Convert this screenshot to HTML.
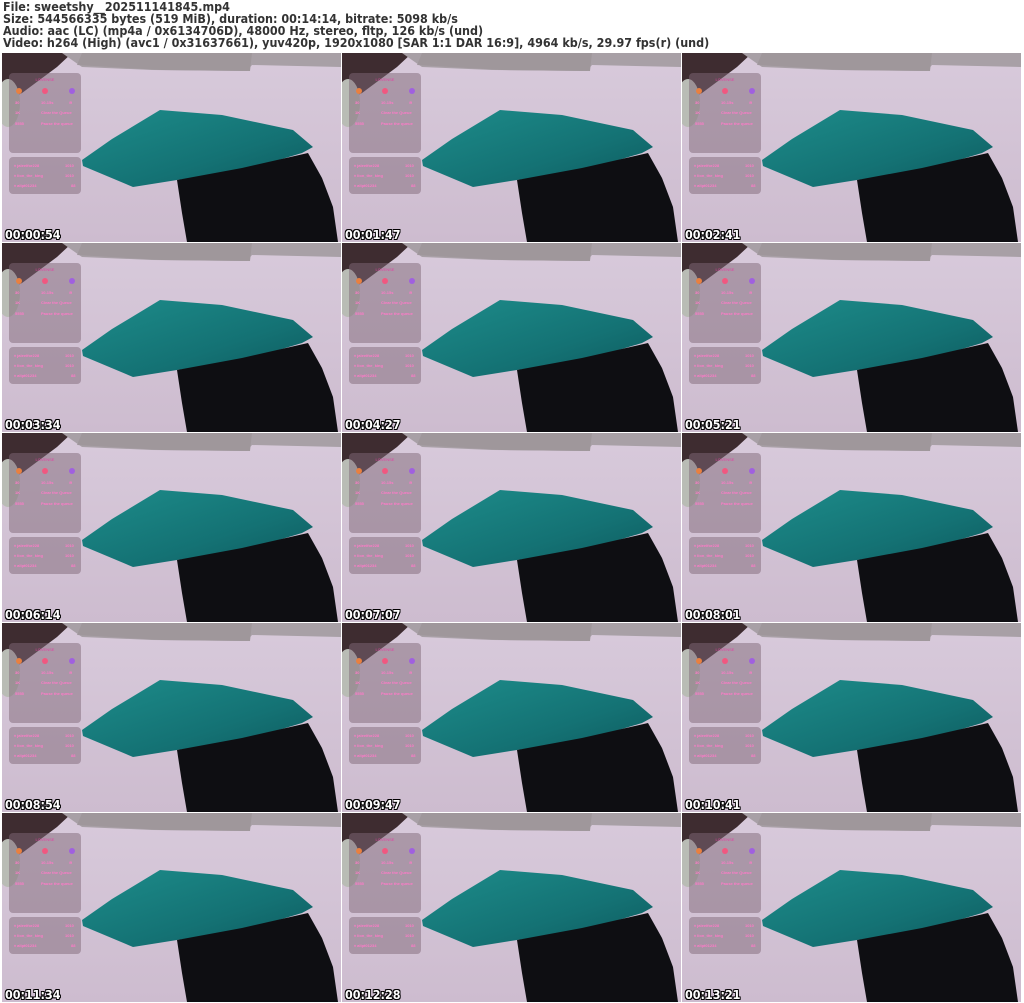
<!DOCTYPE html>
<html><head><meta charset="utf-8"><style>
html,body{margin:0;padding:0;background:#fff;width:1024px;height:1003px;overflow:hidden;position:relative}
.h{position:absolute;left:3px;top:1px;font:bold 12px/12px "DejaVu Sans",sans-serif;color:#333;white-space:pre;transform:scaleX(0.932);transform-origin:0 0}
.t{position:absolute;width:339px;height:189px;overflow:hidden;background:#d3c4d5}
.t svg{position:absolute;left:0;top:0}
.ts{position:absolute;left:3px;bottom:1px;font:bold 12px/12px "DejaVu Sans",sans-serif;color:#fff;transform:scaleX(0.93);transform-origin:0 0;text-shadow:1px 1px 0 #000,-1px -1px 0 #000,1px -1px 0 #000,-1px 1px 0 #000,0 1px 0 #000,1px 0 0 #000}
</style></head><body>
<div class="h">File: sweetshy__202511141845.mp4
Size: 544566335 bytes (519 MiB), duration: 00:14:14, bitrate: 5098 kb/s
Audio: aac (LC) (mp4a / 0x6134706D), 48000 Hz, stereo, fltp, 126 kb/s (und)
Video: h264 (High) (avc1 / 0x31637661), yuv420p, 1920x1080 [SAR 1:1 DAR 16:9], 4964 kb/s, 29.97 fps(r) (und)</div>
<svg width="0" height="0" style="position:absolute"><defs>
<linearGradient id="bed" x1="0" y1="0" x2="0" y2="1"><stop offset="0" stop-color="#d8cadb"/><stop offset="1" stop-color="#cdbccf"/></linearGradient>
<linearGradient id="pil" x1="0" y1="0" x2="1" y2="1"><stop offset="0" stop-color="#1d8c8a"/><stop offset="0.6" stop-color="#147274"/><stop offset="1" stop-color="#0e5a5e"/></linearGradient>
<symbol id="sc" viewBox="0 0 339 189">
<rect width="339" height="189" fill="url(#bed)"/>
<polygon points="0,0 70,0 55,14 20,40 0,50" fill="#3e2c30"/>
<polygon points="60,0 339,0 339,14 250,12 245,18 150,17 80,14" fill="#a8a0a6"/>
<polygon points="80,0 250,0 248,18 160,17 75,12" fill="#9f979b"/>
<ellipse cx="6" cy="50" rx="12" ry="24" fill="#b9bcb5"/>
<polygon points="80,107 110,86 158,57 220,62 291,77 311,94 300,100 240,118 175,127 131,134 81,113" fill="url(#pil)"/>
<polygon points="175,127 240,115 306,100 320,125 331,154 336,189 185,189 180,160" fill="#0e0e12"/>
<rect x="7" y="20" width="72" height="80" rx="4" fill="#806878" opacity="0.5"/>
<rect x="7" y="104" width="72" height="37" rx="4" fill="#806878" opacity="0.5"/>
<text x="43" y="28" font-size="4" fill="#e040a0" text-anchor="middle" font-family="Liberation Sans,sans-serif">LOVENSE</text>
<circle cx="17" cy="38" r="3" fill="#e88040"/><circle cx="43" cy="38" r="3" fill="#f05880"/><circle cx="70" cy="38" r="3" fill="#a060e0"/>
<g font-size="4" fill="#ff7ac8" font-family="Liberation Sans,sans-serif" font-weight="bold">
<text x="13" y="51">30</text><text x="39" y="51">10-15s</text><text x="67" y="51">≋</text>
<text x="13" y="61">1K</text><text x="39" y="61">Clear the Queue</text>
<text x="13" y="72">5555</text><text x="39" y="72">Pause the queue</text>
<text x="12" y="114">♦ jaleelfor228</text><text x="63" y="114">1010</text>
<text x="12" y="124">♦ lion_the_king</text><text x="63" y="124">1010</text>
<text x="12" y="134">♦ allpt01234</text><text x="69" y="134">88</text>
</g>
</symbol></defs></svg>
<div class="t" style="left:2px;top:53px"><svg width="339" height="189"><use href="#sc"/></svg><div class="ts">00:00:54</div></div>
<div class="t" style="left:342px;top:53px"><svg width="339" height="189"><use href="#sc"/></svg><div class="ts">00:01:47</div></div>
<div class="t" style="left:682px;top:53px"><svg width="339" height="189"><use href="#sc"/></svg><div class="ts">00:02:41</div></div>
<div class="t" style="left:2px;top:243px"><svg width="339" height="189"><use href="#sc"/></svg><div class="ts">00:03:34</div></div>
<div class="t" style="left:342px;top:243px"><svg width="339" height="189"><use href="#sc"/></svg><div class="ts">00:04:27</div></div>
<div class="t" style="left:682px;top:243px"><svg width="339" height="189"><use href="#sc"/></svg><div class="ts">00:05:21</div></div>
<div class="t" style="left:2px;top:433px"><svg width="339" height="189"><use href="#sc"/></svg><div class="ts">00:06:14</div></div>
<div class="t" style="left:342px;top:433px"><svg width="339" height="189"><use href="#sc"/></svg><div class="ts">00:07:07</div></div>
<div class="t" style="left:682px;top:433px"><svg width="339" height="189"><use href="#sc"/></svg><div class="ts">00:08:01</div></div>
<div class="t" style="left:2px;top:623px"><svg width="339" height="189"><use href="#sc"/></svg><div class="ts">00:08:54</div></div>
<div class="t" style="left:342px;top:623px"><svg width="339" height="189"><use href="#sc"/></svg><div class="ts">00:09:47</div></div>
<div class="t" style="left:682px;top:623px"><svg width="339" height="189"><use href="#sc"/></svg><div class="ts">00:10:41</div></div>
<div class="t" style="left:2px;top:813px"><svg width="339" height="189"><use href="#sc"/></svg><div class="ts">00:11:34</div></div>
<div class="t" style="left:342px;top:813px"><svg width="339" height="189"><use href="#sc"/></svg><div class="ts">00:12:28</div></div>
<div class="t" style="left:682px;top:813px"><svg width="339" height="189"><use href="#sc"/></svg><div class="ts">00:13:21</div></div>
</body></html>
